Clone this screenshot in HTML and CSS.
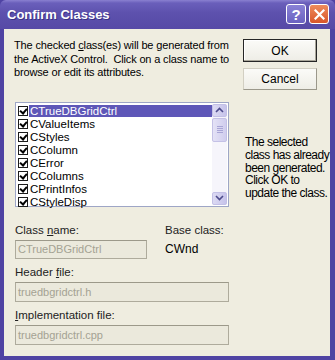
FILE: index.html
```html
<!DOCTYPE html>
<html>
<head>
<meta charset="utf-8">
<link rel="stylesheet" href="styles.css">
</head>
<body>
<div class="window">
  <div class="titlebar">
    <span class="title">Confirm Classes</span>
    <div class="tbtns">
      <span class="tbtn help">?</span>
      <span class="tbtn close">
        <svg width="11" height="11" viewBox="0 0 11 11"><path d="M1.5 1.5 L9.5 9.5 M9.5 1.5 L1.5 9.5" stroke="#fff" stroke-width="2.2" stroke-linecap="square"/></svg>
      </span>
    </div>
  </div>
  <div class="client">
    <div class="leftcol">
      <p class="intro">The checked <u>c</u>lass(es) will be generated from<br>the ActiveX Control.&nbsp; Click on a class name to<br>browse or edit its attributes.</p>
      <div class="listbox">
        <ul class="items">
          <li class="item sel"><span class="chk"></span><span class="lbl">CTrueDBGridCtrl</span></li>
          <li class="item"><span class="chk"></span><span class="lbl">CValueItems</span></li>
          <li class="item"><span class="chk"></span><span class="lbl">CStyles</span></li>
          <li class="item"><span class="chk"></span><span class="lbl">CColumn</span></li>
          <li class="item"><span class="chk"></span><span class="lbl">CError</span></li>
          <li class="item"><span class="chk"></span><span class="lbl">CColumns</span></li>
          <li class="item"><span class="chk"></span><span class="lbl">CPrintInfos</span></li>
          <li class="item"><span class="chk"></span><span class="lbl">CStyleDisp</span></li>
        </ul>
        <div class="vscroll">
          <span class="sbtn"><svg width="9" height="6" viewBox="0 0 9 6"><path d="M1 5 L4.5 1.5 L8 5" fill="none" stroke="#4d4b8c" stroke-width="1.6"/></svg></span>
          <span class="thumb"><i></i><i></i><i></i><i></i></span>
          <span class="track"></span>
          <span class="sbtn"><svg width="9" height="6" viewBox="0 0 9 6"><path d="M1 1 L4.5 4.5 L8 1" fill="none" stroke="#4d4b8c" stroke-width="1.6"/></svg></span>
        </div>
      </div>
      <div class="namerow">
        <div class="field">
          <span class="flabel">Class <u>n</u>ame:</span>
          <div class="edit short">CTrueDBGridCtrl</div>
        </div>
        <div class="field">
          <span class="flabel">Base class:</span>
          <span class="base">CWnd</span>
        </div>
      </div>
      <div class="field block">
        <span class="flabel">Header <u>f</u>ile:</span>
        <div class="edit">truedbgridctrl.h</div>
      </div>
      <div class="field block">
        <span class="flabel"><u>I</u>mplementation file:</span>
        <div class="edit">truedbgridctrl.cpp</div>
      </div>
    </div>
    <div class="rightcol">
      <button class="btn default">OK</button>
      <button class="btn">Cancel</button>
      <p class="note">The selected<br>class has already<br>been generated.<br>Click OK to<br>update the class.</p>
    </div>
  </div>
</div>
</body>
</html>
```

FILE: styles.css
```css
* { box-sizing: border-box; }
html, body { margin: 0; padding: 0; }
body {
  width: 335px;
  height: 360px;
  overflow: hidden;
  font-family: "Liberation Sans", Arial, sans-serif;
  font-size: 11px;
  color: #000;
}
.window {
  width: 335px;
  height: 360px;
  display: flex;
  flex-direction: column;
  background: #4f43a3;
}
.titlebar {
  height: 29px;
  flex: none;
  display: flex;
  align-items: center;
  justify-content: space-between;
  padding: 0 6px 1px 7px;
  background: linear-gradient(#8a80d0 0, #6a5fbb 3px, #5d51ad 45%, #5649a6 100%);
  border-radius: 6px 6px 0 0;
}
.title {
  color: #fff;
  font-weight: bold;
  font-size: 13px;
  text-shadow: 1px 1px 0 #3b3285;
}
.tbtns { display: flex; gap: 3px; }
.tbtn {
  width: 20px;
  height: 20px;
  border: 1px solid #fff;
  border-radius: 3px;
  display: flex;
  align-items: center;
  justify-content: center;
  color: #fff;
  font-weight: bold;
  font-size: 15px;
}
.help { background: linear-gradient(#8a82d6, #6a61c0); }
.close { background: linear-gradient(#ee8b5c, #d9562a); }
.client {
  flex: 1;
  margin: 0 5px 4px 4px;
  background: #efede0;
  display: flex;
  padding: 10px 13px 0 11px;
  gap: 14px;
}
.leftcol { width: 214px; display: flex; flex-direction: column; }
.intro {
  margin: 0 0 0 -1px;
  line-height: 13.5px;
  white-space: nowrap;
  letter-spacing: -0.15px;
}
.listbox {
  margin-top: 22px;
  height: 105px;
  border: 1px solid #9ea6c6;
  background: #fff;
  display: flex;
  padding: 1px;
}
.items { list-style: none; margin: 0; padding: 1px 0 0 0; flex: 1; }
.item { height: 13px; display: flex; align-items: center; line-height: 13px; padding-left: 1px; }
.chk {
  width: 10px;
  height: 10px;
  border: 1px solid #1c1c1c;
  margin-right: 1px;
  position: relative;
  flex: none;
}
.chk::after {
  content: "";
  position: absolute;
  left: 2px;
  top: 0px;
  width: 3px;
  height: 5px;
  border: solid #000;
  border-width: 0 2px 2px 0;
  transform: rotate(40deg);
}
.lbl { flex: 1; height: 12px; line-height: 12px; padding-left: 1px; font-size: 11.5px; }
.sel .lbl { background: #5e57b8; color: #fff; }
.vscroll {
  width: 15px;
  display: flex;
  flex-direction: column;
  background: #f6f5fb;
}
.sbtn {
  height: 13px;
  flex: none;
  background: linear-gradient(90deg, #dcdaf3, #c6c3ea);
  border: 1px solid #c3c0e6;
  border-radius: 2px;
  display: flex;
  align-items: center;
  justify-content: center;
}
.thumb {
  height: 24px;
  flex: none;
  margin-top: 1px;
  background: linear-gradient(90deg, #e4e2f6, #d0cdee);
  border: 1px solid #c4c1e6;
  border-radius: 2px;
  display: flex;
  flex-direction: column;
  align-items: center;
  justify-content: center;
  gap: 1px;
}
.thumb i { display: block; width: 6px; height: 1px; background: #a8a5d6; }
.track { flex: 1; }
.namerow {
  margin-top: 17px;
  display: grid;
  grid-template-columns: 132px 1fr;
  gap: 18px;
}
.field { display: flex; flex-direction: column; }
.flabel { line-height: 13px; height: 13px; color: #222; font-size: 11.5px; }
.edit {
  margin-top: 3px;
  height: 19px;
  border: 1px solid #aeab9c;
  border-top-color: #9c998a;
  background: #ebe9dc;
  color: #a4a293;
  line-height: 17px;
  padding-left: 2px;
  font-size: 11px;
}
.base { margin-top: 4px; line-height: 17px; font-size: 12px; }
.block { margin-top: 7px; }
.block .edit { height: 20px; line-height: 18px; }
.rightcol { width: 74px; display: flex; flex-direction: column; }
.btn {
  width: 74px;
  height: 23px;
  font-family: "Liberation Sans", Arial, sans-serif;
  font-size: 12px;
  color: #000;
  background: linear-gradient(#fbfbf8, #eeede6);
  border: 1px solid #d2cfc2;
  border-right-color: #9b988b;
  border-bottom-color: #9b988b;
  padding: 0;
  margin: 0;
}
.default {
  border: 1px solid #262626;
  box-shadow: inset -1px -1px 0 #a9a699, inset 1px 1px 0 #fff;
}
.btn + .btn { margin-top: 6px; height: 22px; }
.note {
  margin: 46px 0 0 2px;
  line-height: 12.8px;
  font-size: 12px;
  letter-spacing: -0.5px;
  white-space: nowrap;
}
```
